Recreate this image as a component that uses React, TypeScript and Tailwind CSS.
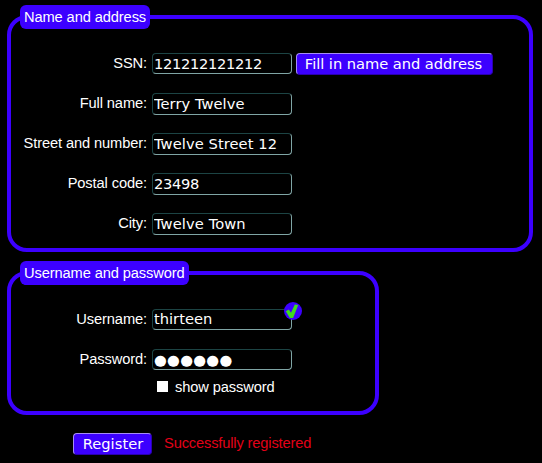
import type { ReactNode } from "react";

const inputClass =
  "block w-[140px] rounded-[4px] border border-t-[#1c4444] border-l-[#1c4444] border-r-[#7fa5a5] border-b-[#7fa5a5] bg-black px-px pt-0 font-['DejaVu_Sans',sans-serif] text-[14.67px] leading-[19px] text-white outline-none";

const buttonClass =
  "block h-[22px] rounded-[4px] border border-t-[#a58cf5] border-l-[#a58cf5] border-r-[#2a00b0] border-b-[#2a00b0] bg-[#3c00ff] py-0 text-center font-['DejaVu_Sans',sans-serif] text-[14.67px] leading-[20px] text-white whitespace-nowrap";

function Row({ label, children }: { label: string; children: ReactNode }) {
  return (
    <div className="flex h-10 items-start">
      <label className="w-[127px] shrink-0 text-right leading-[20px] whitespace-nowrap">{label}</label>
      <div className="ml-[5px] flex items-start gap-1">{children}</div>
    </div>
  );
}

function Legend({ children }: { children: ReactNode }) {
  return (
    <legend className="h-6 rounded-[6px] bg-[#3c00ff] px-1 leading-[24px] whitespace-nowrap">{children}</legend>
  );
}

function CheckBadge() {
  return (
    <svg className="absolute -top-[7px] left-[132px]" width="18" height="18" viewBox="0 0 18 18">
      <circle cx="9" cy="9" r="9" fill="#3c00ff" />
      <path d="M1.8 9.2 L4.8 7.6 L7 10.8 L10.8 2.6 L14.2 3 L9.1 15.9 L5.8 15.9 Z" fill="#3fdc1e" />
    </svg>
  );
}

export default function App() {
  return (
    <div className="h-[463px] w-[542px] overflow-hidden bg-black pt-[5px] pl-[7px] font-['Liberation_Sans',Arial,sans-serif] text-[14.67px] tracking-[-0.11px] text-white">
      <fieldset className="h-[247px] w-[526px] rounded-[20px] border-4 border-[#3c00ff] px-[9px]">
        <Legend>Name and address</Legend>
        <div className="pt-6">
          <Row label="SSN:">
            <input className={`${inputClass} h-[21px] pb-0 tracking-[-0.33px]`} defaultValue="121212121212" />
            <button className={`${buttonClass} w-[197px] pr-[2px] tracking-[-0.04px]`}>Fill in name and address</button>
          </Row>
          <Row label="Full name:">
            <input className={`${inputClass} h-[22px] pb-[2px] tracking-[0.05px]`} defaultValue="Terry Twelve" />
          </Row>
          <Row label="Street and number:">
            <input className={`${inputClass} h-[22px] pb-[2px] tracking-[0.08px]`} defaultValue="Twelve Street 12" />
          </Row>
          <Row label="Postal code:">
            <input className={`${inputClass} h-[22px] pb-[2px] tracking-[-0.33px]`} defaultValue="23498" />
          </Row>
          <Row label="City:">
            <input className={`${inputClass} h-[22px] pb-[2px] tracking-[0.1px]`} defaultValue="Twelve Town" />
          </Row>
        </div>
      </fieldset>
      <fieldset className="mt-[9px] h-[154px] w-[372px] rounded-[20px] border-4 border-[#3c00ff] px-[9px]">
        <Legend>Username and password</Legend>
        <div className="pt-6">
          <Row label="Username:">
            <div className="relative">
              <input className={`${inputClass} h-[21px] pb-[2px] tracking-normal`} defaultValue="thirteen" />
              <CheckBadge />
            </div>
          </Row>
          <Row label="Password:">
            <input className={`${inputClass} h-[21px] pb-0 tracking-[0.3px]`} defaultValue="●●●●●●" />
          </Row>
          <label className="-mt-[12px] ml-[137px] flex h-5 items-center">
            <input type="checkbox" className="-mt-[2px] size-[11px] appearance-none bg-white" />
            <span className="ml-[7px] whitespace-nowrap">show password</span>
          </label>
        </div>
      </fieldset>
      <div className="mt-[18px] ml-[66px] flex items-start">
        <button className={`${buttonClass} w-[79px] pl-px tracking-[0.05px]`}>Register</button>
        <span className="ml-3 leading-[20px] tracking-[-0.15px] whitespace-nowrap text-[#e30018]">Successfully registered</span>
      </div>
    </div>
  );
}
